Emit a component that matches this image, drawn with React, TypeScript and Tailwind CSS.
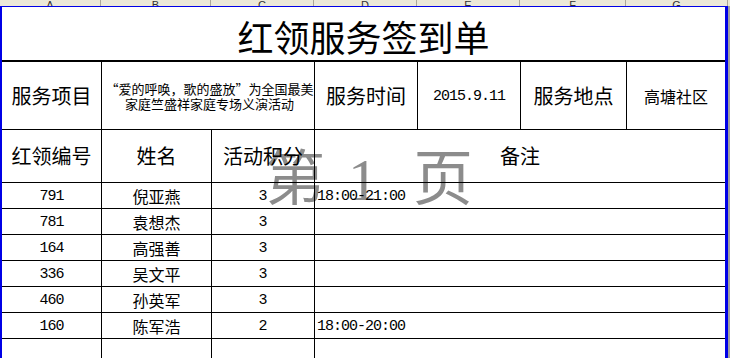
const CJK = { fontFamily: '"Noto Sans CJK SC", "Noto Sans", sans-serif' };
const MONO = { fontFamily: '"Liberation Mono", "Noto Sans CJK SC", monospace' };

const letters = [
  { l: 'A', w: 'w-[101px]' },
  { l: 'B', w: 'w-[110px]' },
  { l: 'C', w: 'w-[103px]' },
  { l: 'D', w: 'w-[103px]' },
  { l: 'E', w: 'w-[103px]' },
  { l: 'F', w: 'w-[106px]' },
  { l: 'G', w: 'w-[102px]' },
];

const rows = [
  { id: '791', name: '倪亚燕', score: '3', note: '18:00-21:00' },
  { id: '781', name: '袁想杰', score: '3', note: '' },
  { id: '164', name: '高强善', score: '3', note: '' },
  { id: '336', name: '吴文平', score: '3', note: '' },
  { id: '460', name: '孙英军', score: '3', note: '' },
  { id: '160', name: '陈军浩', score: '2', note: '18:00-20:00' },
];

const grid = 'grid grid-cols-[100px_110px_103px_103px_103px_106px_98px]';

export default function App() {
  return (
    <div className="relative w-[730px] h-[358px] overflow-hidden bg-white text-black" style={CJK}>
      {/* column header strip, mostly scrolled off */}
      <div className="flex h-[6px] overflow-hidden bg-[#ece9d8]">
        {letters.map((c) => (
          <div
            key={c.l}
            className={`${c.w} shrink-0 flex items-end justify-center border-r border-[#aca899]`}
          >
            <span className="text-[11px] leading-none text-[#333] translate-y-[5px]" style={{ fontFamily: '"Liberation Sans", sans-serif' }}>
              {c.l}
            </span>
          </div>
        ))}
      </div>

      <div className="flex">
        <div className="relative z-10 w-[728px] border-l-2 border-t border-r-[3px] border-[#0000e6]">
          {/* title */}
          <div className="h-[55px] flex items-center justify-center border-b-2 border-black">
            <span className="text-[36px] leading-none pt-[4px]">红领服务签到单</span>
          </div>

          {/* info row */}
          <div className={`${grid} h-[68px] border-b border-black`}>
            <div className="flex items-center justify-center border-r border-black text-[20px]">服务项目</div>
            <div className="col-span-2 flex flex-col items-center justify-center border-r border-black text-[13px] leading-[15px] pl-[3px]">
              <span>“爱的呼唤，歌的盛放”为全国最美</span>
              <span>家庭竺盛祥家庭专场义演活动</span>
            </div>
            <div className="flex items-center justify-center border-r border-black text-[20px]">服务时间</div>
            <div className="flex items-center justify-center border-r border-black text-[15px] tracking-[-1px] pt-[3px]" style={MONO}>
              2015.9.11
            </div>
            <div className="flex items-center justify-center border-r border-black text-[20px]">服务地点</div>
            <div className="flex items-center justify-center text-[16px]">高塘社区</div>
          </div>

          {/* header row */}
          <div className={`${grid} h-[53px] border-b border-black text-[20px]`}>
            <div className="flex items-center justify-center border-r border-black">红领编号</div>
            <div className="flex items-center justify-center border-r border-black">姓名</div>
            <div className="flex items-center justify-center border-r border-black">活动积分</div>
            <div className="col-span-4 flex items-center justify-center">备注</div>
          </div>

          {rows.map((r) => (
            <div key={r.id} className={`${grid} h-[26px] border-b border-black`}>
              <div className="flex items-center justify-center border-r border-black text-[15px] tracking-[-1px] pt-[3px]" style={MONO}>
                {r.id}
              </div>
              <div className="flex items-center justify-center border-r border-black text-[16px]">{r.name}</div>
              <div className="flex items-center justify-center border-r border-black text-[15px] pt-[3px]" style={MONO}>
                {r.score}
              </div>
              <div className="col-span-4 flex items-center pl-[2px] text-[15px] tracking-[-1px] pt-[3px]" style={MONO}>
                {r.note}
              </div>
            </div>
          ))}

          <div className={`${grid} h-[30px]`}>
            <div className="border-r border-black" />
            <div className="border-r border-black" />
            <div className="border-r border-black" />
            <div className="col-span-4" />
          </div>
        </div>
        <div className="w-[2px] bg-[#a0a0a0]" />
      </div>

      {/* page break preview watermark */}
      <div
        className="absolute z-0 left-[265px] top-[150px] flex items-center text-[60px] leading-none text-[#8c8c8c]"
        style={{ fontFamily: '"Liberation Serif", "Noto Sans CJK SC", serif' }}
      >
        <span className="w-[83px]">第</span>
        <span className="w-[65px]">1</span>
        <span>页</span>
      </div>
    </div>
  );
}
